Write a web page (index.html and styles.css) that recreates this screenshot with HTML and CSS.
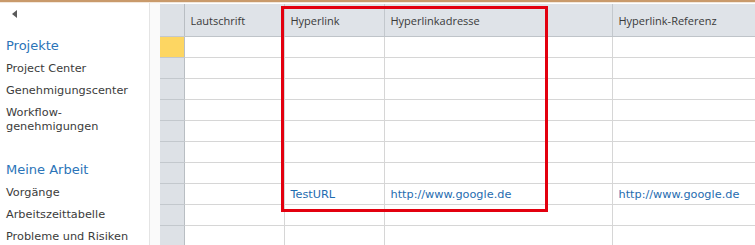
FILE: index.html
```html
<!DOCTYPE html>
<html lang="de">

<head>
  <meta charset="UTF-8">
  <meta name="viewport" content="width=device-width, initial-scale=1.0">
  <title>Datenblatt</title>
  <link rel="stylesheet" href="styles.css">
</head>

<body>
  <div class="topline"></div>
  <div class="page">
    <nav class="quicklaunch">
      <div class="back">
        <svg width="5" height="8" viewBox="0 0 5 8"><polygon points="5,0 5,8 0,4" fill="#5a5a5a" /></svg>
      </div>
      <h3 class="nav-head">Projekte</h3>
      <ul class="nav-list">
        <li>Project Center</li>
        <li>Genehmigungscenter</li>
        <li>Workflow-<br>genehmigungen</li>
      </ul>
      <h3 class="nav-head second">Meine Arbeit</h3>
      <ul class="nav-list">
        <li>Vorgänge</li>
        <li>Arbeitszeittabelle</li>
        <li>Probleme und Risiken</li>
      </ul>
    </nav>

    <div class="spacer"></div>

    <div class="sheet">
      <table class="grid">
        <colgroup>
          <col class="c-rowhead">
          <col class="c-laut">
          <col class="c-link">
          <col class="c-addr">
          <col class="c-ref">
        </colgroup>
        <thead>
          <tr>
            <th class="rowhead"></th>
            <th>Lautschrift</th>
            <th>Hyperlink</th>
            <th>Hyperlinkadresse</th>
            <th>Hyperlink-Referenz</th>
          </tr>
        </thead>
        <tbody>
          <tr><td class="rowhead current"></td><td></td><td></td><td></td><td></td></tr>
          <tr><td class="rowhead"></td><td></td><td></td><td></td><td></td></tr>
          <tr><td class="rowhead"></td><td></td><td></td><td></td><td></td></tr>
          <tr><td class="rowhead"></td><td></td><td></td><td></td><td></td></tr>
          <tr><td class="rowhead"></td><td></td><td></td><td></td><td></td></tr>
          <tr><td class="rowhead"></td><td></td><td></td><td></td><td></td></tr>
          <tr><td class="rowhead"></td><td></td><td></td><td></td><td></td></tr>
          <tr>
            <td class="rowhead"></td>
            <td></td>
            <td class="link">TestURL</td>
            <td class="link">http://www.google.de</td>
            <td class="link">http://www.google.de</td>
          </tr>
          <tr><td class="rowhead"></td><td></td><td></td><td></td><td></td></tr>
          <tr><td class="rowhead"></td><td></td><td></td><td></td><td></td></tr>
        </tbody>
      </table>
      <!-- rote Markierung -->
      <div class="highlight"></div>
    </div>
  </div>
</body>

</html>
```

FILE: styles.css
```css
body {
  margin: 0;
  font-family: "DejaVu Sans", Verdana, sans-serif;
  background: #fff;
  overflow: hidden;
}

.topline {
  height: 2px;
  background: #c99a6b;
  border-bottom: 1px solid #f3e8dc;
}

.page {
  display: flex;
  height: 242px;
}

/* linke Navigation */
.quicklaunch {
  width: 150px;
  flex: none;
  border-right: 1px solid #e4e4e4;
  padding-left: 6px;
  box-sizing: border-box;
}

.back {
  padding: 7px 0 0 6px;
  height: 16px;
}

.back svg {
  display: block;
}

.nav-head {
  margin: 12px 0 0;
  font-size: 13px;
  font-weight: normal;
  color: #2b74b8;
  line-height: 16px;
}

.nav-head.second {
  margin-top: 28px;
}

.nav-list {
  list-style: none;
  margin: 0;
  padding: 0;
}

.nav-list li {
  font-size: 11.3px;
  color: #3b3b3b;
  line-height: 14px;
  margin-top: 8px;
}

.spacer {
  width: 10px;
  flex: none;
  background: #fafafa;
}

/* Datenblatt */
.sheet {
  position: relative;
  flex: 1;
  overflow: hidden;
  padding-top: 1px;
}

.grid {
  border-collapse: collapse;
  table-layout: fixed;
  width: 720px;
}

.c-rowhead {
  width: 24px;
}

.c-laut {
  width: 100px;
}

.c-link {
  width: 100px;
}

.c-addr {
  width: 228px;
}

.c-ref {
  width: 268px;
}

.grid th {
  height: 32px;
  background: #dfe3e8;
  border-right: 1px solid #c3c8cd;
  border-bottom: 1px solid #bfc4c9;
  font-family: "Open Sans", "Noto Sans", sans-serif;
  font-weight: normal;
  font-size: 11px;
  color: #3a3a3a;
  text-align: left;
  padding: 0 6px;
}

.grid td {
  height: 20px;
  border-right: 1px solid #d6d6d6;
  border-bottom: 1px solid #d6d6d6;
  padding: 0 6px;
  font-size: 11.3px;
  white-space: nowrap;
}

.grid .rowhead {
  background: #dde1e6;
  border-right: 1px solid #b9bec3;
  border-bottom: 1px solid #c3c8cd;
  padding: 0;
}

.grid .rowhead.current {
  background: #fdd662;
}

.link {
  color: #1f6cb0;
}

.highlight {
  position: absolute;
  left: 121px;
  top: 3px;
  width: 261px;
  height: 200px;
  border: 3px solid #e3000f;
}
```
